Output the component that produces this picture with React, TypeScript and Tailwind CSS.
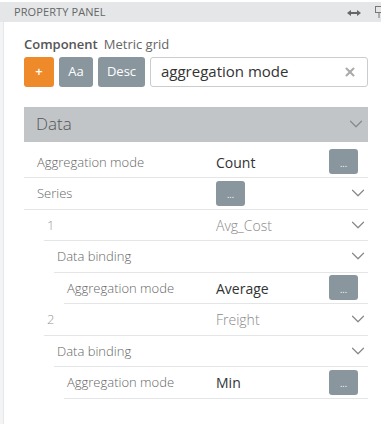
import { ChevronDown, X } from "lucide-react";

type Row = {
  label: string;
  indent: number;
  value?: string;
  valueTone?: "dark" | "light";
  button?: "right" | "value";
  chevron?: boolean;
};

const rows: Row[] = [
  { label: "Aggregation mode", indent: 0, value: "Count", valueTone: "dark", button: "right" },
  { label: "Series", indent: 0, button: "value", chevron: true },
  { label: "1", indent: 20, value: "Avg_Cost", valueTone: "light", chevron: true },
  { label: "Data binding", indent: 30, chevron: true },
  { label: "Aggregation mode", indent: 40, value: "Average", valueTone: "dark", button: "right" },
  { label: "2", indent: 20, value: "Freight", valueTone: "light", chevron: true },
  { label: "Data binding", indent: 30, chevron: true },
  { label: "Aggregation mode", indent: 40, value: "Min", valueTone: "dark", button: "right" },
];

function DotsButton() {
  return (
    <span className="flex h-[25px] w-[29px] items-center justify-center rounded-[3px] bg-[#8a969e] pt-[3px] text-[9px] leading-none text-white">
      ...
    </span>
  );
}

function PropRow({ row }: { row: Row }) {
  const indentClass =
    row.indent === 0 ? "ml-0" : row.indent === 20 ? "ml-[20px]" : row.indent === 30 ? "ml-[30px]" : "ml-[40px]";
  const textPad = row.indent === 0 ? "pl-[13px]" : "pl-[3px]";
  const labelWidth =
    row.indent === 0 ? "w-[192px]" : row.indent === 20 ? "w-[172px]" : row.indent === 30 ? "w-[162px]" : "w-[152px]";
  return (
    <div className={`${indentClass} flex h-[31.5px] items-center border-b border-[#e3e5e7]`}>
      <span
        className={`${textPad} ${labelWidth} shrink-0 pt-[1px] text-[13px] font-light ${
          row.indent === 20 ? "text-[#999]" : "text-[#666]"
        }`}
      >
        {row.label}
      </span>
      <div className="flex flex-1 items-center">
        {row.value && (
          <span
            className={`pt-[1px] text-[14px] ${row.valueTone === "dark" ? "text-[#333]" : "font-light text-[#888]"}`}
          >
            {row.value}
          </span>
        )}
        {row.button === "value" && <DotsButton />}
      </div>
      {row.button === "right" && (
        <div className="mr-[10px]">
          <DotsButton />
        </div>
      )}
      {row.chevron && <ChevronDown className="mr-[-1px] h-[22px] w-[22px] text-[#888]" strokeWidth={1.3} />}
    </div>
  );
}

export default function App() {
  return (
    <div className="h-[424px] w-[381px] overflow-hidden bg-white font-['Open_Sans',sans-serif]">
      <div className="mt-[2px] flex h-[20px] items-center justify-between bg-[#e4e6e8] pl-[14px]">
        <span className="text-[11px] tracking-[0.1px] text-[#666]">PROPERTY PANEL</span>
        <div className="flex items-center gap-[14px] text-[#666]">
          <svg width="14" height="8" viewBox="0 0 14 8" className="mt-[1px]">
            <path d="M0 4 L4 1 L4 7 Z M14 4 L10 1 L10 7 Z" fill="#666" />
            <rect x="3" y="3" width="8" height="2" fill="#666" />
          </svg>
          <svg width="8" height="12" viewBox="0 0 8 12" className="-mr-[2px]">
            <rect x="0.5" y="0.5" width="7" height="6" fill="none" stroke="#777" />
            <line x1="4" y1="7" x2="4" y2="12" stroke="#777" />
          </svg>
        </div>
      </div>
      <div className="flex h-[402px]">
        <div className="w-[4px] shrink-0 border-r border-[#e6e8ea] bg-[#f3f4f5]" />
        <div className="flex-1 pl-[20px] pr-[13px]">
          <div className="mt-[13px] flex items-baseline gap-[6px] text-[13px]">
            <span className="font-semibold text-[#555]">Component</span>
            <span className="text-[#666]">Metric grid</span>
          </div>
          <div className="mt-[2px] flex h-[30px] gap-[5px]">
            <span className="flex w-[30px] items-center justify-center rounded-[3px] bg-[#ee8a2a] text-[13px] font-semibold text-white">
              +
            </span>
            <span className="flex w-[34px] items-center justify-center rounded-[3px] bg-[#8a969e] text-[13px] text-white">
              Aa
            </span>
            <span className="flex w-[47px] items-center justify-center rounded-[3px] bg-[#8a969e] text-[13px] text-white">
              Desc
            </span>
            <div className="flex flex-1 items-center justify-between rounded-[3px] border border-[#c9cdd0] pl-[10px] pr-[10px]">
              <span className="text-[15px] text-[#333]">aggregation mode</span>
              <X className="h-[14px] w-[14px] text-[#aaa]" strokeWidth={3.5} />
            </div>
          </div>
          <div className="mt-[20px] flex h-[35px] items-center justify-between bg-[#c1c5c8] pl-[12px] pr-[1px]">
            <span className="text-[17px] font-light text-[#555]">Data</span>
            <ChevronDown className="h-[22px] w-[22px] text-[#888]" strokeWidth={1.3} />
          </div>
          <div className="mt-[5px]">
            {rows.map((row, i) => (
              <PropRow key={i} row={row} />
            ))}
          </div>
        </div>
      </div>
    </div>
  );
}
